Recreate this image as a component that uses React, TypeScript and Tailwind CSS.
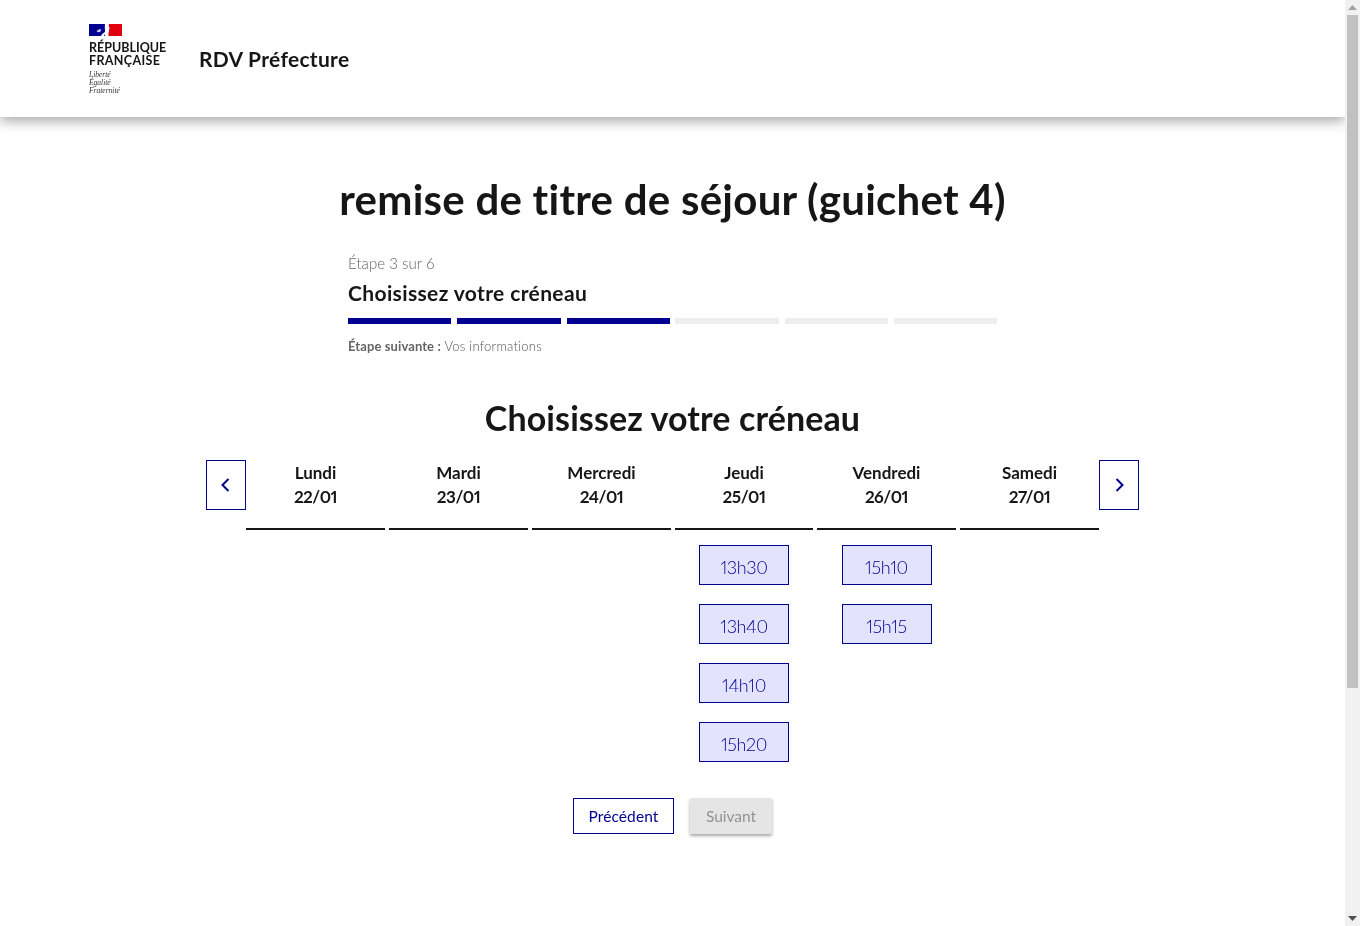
const days = [
  { name: "Lundi", date: "22/01", slots: [] as string[] },
  { name: "Mardi", date: "23/01", slots: [] as string[] },
  { name: "Mercredi", date: "24/01", slots: [] as string[] },
  { name: "Jeudi", date: "25/01", slots: ["13h30", "13h40", "14h10", "15h20"] },
  { name: "Vendredi", date: "26/01", slots: ["15h10", "15h15"] },
  { name: "Samedi", date: "27/01", slots: [] as string[] },
];

const steps = [
  "h-[6px] bg-[#000091]",
  "h-[6px] bg-[#000091]",
  "h-[6px] bg-[#000091]",
  "-ml-px h-[6px] bg-[#eeeeee]",
  "h-[6px] bg-[#eeeeee]",
  "h-[6px] bg-[#eeeeee]",
];

function Flag() {
  return (
    <svg width="33" height="12" viewBox="0 0 33 12" className="block">
      <rect width="33" height="12" fill="#fff" />
      <rect width="16" height="12" fill="#000091" />
      <rect x="19.500" width="13.500" height="12" fill="#e1000f" />
      <path d="M16 0h4c-.6 1-.6 2 0 3l.8 1.500-.8.500c.2.800 0 1.500-.2 2.200-.3 1.300-1.400 1.700-2.700 2-1.100.3-1.700 1.400-2.100 2.800h-3c.8-1.700 2-3 3.600-3.800 1-.5 1.200-1.300.4-2-.3-2.500-.2-4.700 0-6.700z" fill="#fff" />
      <path d="M7.500 7c1.500-1.300 3-1.800 5-2-.7.800-1 1.600-.8 2.500-1 .7-2.500.8-3.200.4z" fill="#c9cbe8" />
    </svg>
  );
}

function Chevron({ dir }: { dir: "left" | "right" }) {
  return (
    <svg width="16" height="16" viewBox="0 0 16 16" fill="none" stroke="#000091" strokeWidth="2">
      <path d={dir === "left" ? "M10.500 2 4.500 8l6 6" : "M5.500 2l6 6-6 6"} />
    </svg>
  );
}

function NavButton({ dir }: { dir: "left" | "right" }) {
  return (
    <button className="flex h-[50px] w-10 shrink-0 items-center justify-center border border-[#000091] bg-white">
      <Chevron dir={dir} />
    </button>
  );
}

function Scrollbar() {
  return (
    <aside className="flex h-full w-[15px] shrink-0 flex-col items-center bg-[#f1f1f1]">
      <div className="flex h-[15px] items-center justify-center">
        <svg width="9" height="5" viewBox="0 0 9 5" className="block">
          <path d="M4.500 0 9 5H0z" fill="#a3a3a3" />
        </svg>
      </div>
      <div className="h-[673px] w-[11px] bg-[#c1c1c1]" />
      <div className="flex-1" />
      <div className="flex h-[15px] items-center justify-center">
        <svg width="9" height="5" viewBox="0 0 9 5" className="block">
          <path d="M0 0h9L4.500 5z" fill="#505050" />
        </svg>
      </div>
    </aside>
  );
}

export default function App() {
  return (
    <div className="flex h-[926px] overflow-hidden bg-white font-['Lato',sans-serif] text-[#161616]">
      <div className="min-w-0 flex-1">
        <header className="flex h-[117px] items-center bg-white pl-[89px] shadow-[0_4px_12px_rgba(0,0,0,0.35)]">
          <div className="flex w-[110px] flex-col pt-[1px] will-change-transform">
            <Flag />
            <div className="mt-[5px] text-[12.500px] leading-[13px] font-bold whitespace-nowrap">
              <div>RÉPUBLIQUE</div>
              <div className="tracking-[0.35px]">FRANÇAISE</div>
            </div>
            <div className="mt-[4px] font-['Liberation_Serif',serif] text-[7.500px] leading-[8px] text-[#333333] italic">
              <div>Liberté</div>
              <div>Égalité</div>
              <div>Fraternité</div>
            </div>
          </div>
          <div className="pt-[1px] text-[21px] leading-7 font-bold tracking-[0.3px] will-change-transform">RDV Préfecture</div>
        </header>

        <main className="flex flex-col items-center will-change-transform">
          <h1 className="mt-[58px] text-[42px] leading-12 font-bold tracking-[0.25px] whitespace-nowrap">
            remise de titre de séjour (guichet 4)
          </h1>

          <section className="mt-[28px] w-[649px]">
            <div className="text-[15px] leading-6 font-light tracking-[0.05px] text-[#666666]">Étape 3 sur 6</div>
            <div className="mt-[4px] text-[21px] leading-7 font-bold tracking-[0.37px]">Choisissez votre créneau</div>
            <div className="mt-[11px] grid grid-cols-[103px_104px_103px_103px_103px_103px] gap-x-[6px]">
              {steps.map((cls, i) => (
                <div key={i} className={cls} />
              ))}
            </div>
            <div className="mt-[12px] text-[13px] leading-5 font-light tracking-[0.1px] text-[#555555]">
              <b className="font-bold text-[#666666]">Étape suivante :</b>{" "}
              <span className="tracking-[0.22px]">Vos informations</span>
            </div>
          </section>

          <h2 className="mt-[42px] text-[34px] leading-10 font-bold tracking-[0.1px]">Choisissez votre créneau</h2>

          <section className="mt-[22px] flex w-[933px] items-start">
            <NavButton dir="left" />
            <div className="grid flex-1 grid-cols-[139px_139px_139px_138px_139px_139px] gap-x-1">
              {days.map((d) => (
                <div key={d.name} className="flex flex-col items-center">
                  <div className="h-[70px] w-full border-b-2 border-[#161616] pt-[1px] text-center text-[17px] leading-6 font-bold">
                    <div>{d.name}</div>
                    <div className="tracking-[-0.5px] proportional-nums">{d.date}</div>
                  </div>
                  <div className="mt-[15px] flex flex-col gap-[19px]">
                    {d.slots.map((s) => (
                      <button
                        key={s}
                        className="h-10 w-[90px] border border-[#000091] bg-[#e3e3fd] pt-1 text-[18px] font-light tracking-[-0.4px] text-[#000091] proportional-nums"
                      >
                        {s}
                      </button>
                    ))}
                  </div>
                </div>
              ))}
            </div>
            <NavButton dir="right" />
          </section>

          <div className="mt-9 flex gap-4">
            <button className="h-9 w-[101px] border border-[#000091] bg-white pt-[1px] text-[15.500px] tracking-[0.1px] text-[#000091]">
              Précédent
            </button>
            <button className="h-9 w-[82px] bg-[#e5e5e5] pt-[1px] text-[15.500px] text-[#929292] shadow-[0_2px_3px_rgba(0,0,0,0.35)]">
              Suivant
            </button>
          </div>
        </main>
      </div>
      <Scrollbar />
    </div>
  );
}
